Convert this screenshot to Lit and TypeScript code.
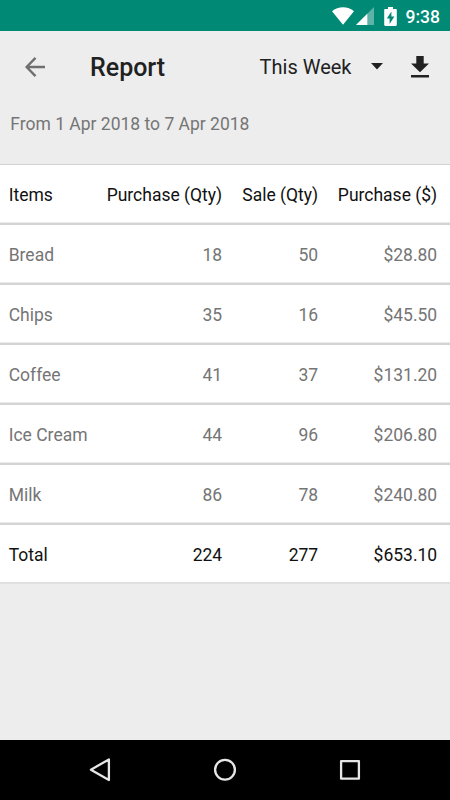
import { LitElement, html, css } from "lit";
import { customElement, property } from "lit/decorators.js";

interface Row {
  cells: string[];
  strong?: boolean;
}

const ROWS: Row[] = [
  { cells: ["Items", "Purchase (Qty)", "Sale (Qty)", "Purchase ($)"], strong: true },
  { cells: ["Bread", "18", "50", "$28.80"] },
  { cells: ["Chips", "35", "16", "$45.50"] },
  { cells: ["Coffee", "41", "37", "$131.20"] },
  { cells: ["Ice Cream", "44", "96", "$206.80"] },
  { cells: ["Milk", "86", "78", "$240.80"] },
  { cells: ["Total", "224", "277", "$653.10"], strong: true },
];

@customElement("status-bar")
class StatusBar extends LitElement {
  static styles = css`
    :host {
      display: flex;
      align-items: center;
      box-sizing: border-box;
      height: 31px;
      background: #008975;
      color: #fff;
      padding: 1px 10px 0 332px;
    }
    svg {
      display: block;
      flex: none;
    }
    .signal {
      margin-left: 2px;
    }
    .battery {
      margin-left: 10px;
    }
    .clock {
      margin-left: auto;
      font-size: 17.5px;
      line-height: 30px;
      font-weight: 500;
      padding-top: 1px;
      white-space: nowrap;
    }
  `;
  render() {
    return html`
      <svg width="22" height="18" viewBox="0 0 22 18" fill="#fff">
        <path d="M0 4.2C3 1.7 7 .3 11 .3s8 1.4 11 3.9L11 17.8z" />
      </svg>
      <svg class="signal" width="18" height="18" viewBox="0 0 18 18" fill="#fff">
        <path d="M18 0v18H0z" opacity=".36" />
        <path d="M11.3 6.7V18H0z" />
      </svg>
      <svg class="battery" width="13" height="19" viewBox="0 0 13 19">
        <path
          fill="#fff"
          fill-rule="evenodd"
          d="M4 0h5v2h2.6c.8 0 1.2.5 1.2 1.2v14.6c0 .7-.4 1.2-1.2 1.2H1.4C.6 19 .2 18.5.2 17.8V3.2C.2 2.5.6 2 1.4 2H4zM7.4 4.6L2.8 11.6h2.8V16.9L10.4 9.6H7.4z"
        />
      </svg>
      <span class="clock">9:38</span>
    `;
  }
}

@customElement("report-header")
class ReportHeader extends LitElement {
  static styles = css`
    :host {
      display: block;
      height: 133px;
    }
    .bar {
      display: flex;
      align-items: center;
      box-sizing: border-box;
      height: 72px;
      padding: 0 21px 1px 25px;
      color: #212121;
    }
    svg {
      display: block;
      flex: none;
    }
    .title {
      margin: 0 0 0 45px;
      padding-top: 2px;
      font-size: 25px;
      line-height: 30px;
      font-weight: 500;
    }
    .period {
      display: flex;
      align-items: center;
      gap: 19.5px;
      margin-left: auto;
      font-size: 20px;
      line-height: 30px;
    }
    .period span {
      padding-top: 1px;
    }
    .download {
      margin-left: 28px;
    }
    .range {
      margin: 9px 0 0 10.3px;
      font-size: 17.5px;
      line-height: 24px;
      color: #757575;
    }
  `;
  render() {
    return html`
      <div class="bar">
        <svg width="20" height="20" viewBox="0 0 20 20" fill="none" stroke="#6f6f6f" stroke-width="2.4">
          <path d="M20 10H2M10.5 .9L1.6 10l8.9 9.1" />
        </svg>
        <h1 class="title">Report</h1>
        <div class="period">
          <span>This Week</span>
          <svg width="12" height="7" viewBox="0 0 12 7" fill="#212121"><path d="M0 0h12L6 6.5z" /></svg>
        </div>
        <svg class="download" width="18" height="22" viewBox="0 0 18 22" fill="#212121">
          <path d="M5.3 0h7.4v7.5H18L9 16.2 0 7.5h5.3zM0 19h18v2.4H0z" />
        </svg>
      </div>
      <p class="range">From 1 Apr 2018 to 7 Apr 2018</p>
    `;
  }
}

@customElement("report-table")
class ReportTable extends LitElement {
  @property({ attribute: false }) rows: Row[] = [];
  static styles = css`
    :host {
      display: block;
      border-top: 1px solid #d2d2d2;
    }
    .row {
      display: grid;
      grid-template-columns: 90px 123.5px 96px 119px;
      box-sizing: border-box;
      height: 60px;
      padding-left: 8.7px;
      line-height: 60px;
      font-size: 17.5px;
      white-space: nowrap;
      background: #fff;
      color: #757575;
      border-bottom: 2px solid #d4d4d4;
      box-shadow: inset 0 -1px #ebebeb;
    }
    .row:last-child {
      height: 59px;
      border-bottom-color: #e0e0e0;
      box-shadow: none;
    }
    .strong {
      color: #111;
    }
    .num {
      text-align: right;
    }
  `;
  render() {
    return this.rows.map(
      (r) => html`<div class="row ${r.strong ? "strong" : ""}">
        ${r.cells.map((c, i) => html`<span class=${i ? "num" : "name"}>${c}</span>`)}
      </div>`
    );
  }
}

@customElement("nav-bar")
class NavBar extends LitElement {
  static styles = css`
    :host {
      display: flex;
      align-items: center;
      justify-content: space-between;
      box-sizing: border-box;
      height: 60px;
      padding: 0 88px;
      background: #000;
    }
    svg {
      display: block;
      fill: none;
      stroke: #e6e6e6;
      stroke-width: 2.3;
      stroke-linejoin: round;
    }
  `;
  render() {
    return html`
      <svg width="24" height="24" viewBox="0 0 24 24"><path d="M20.9 1.4v20.6L2.9 11.7z" /></svg>
      <svg width="24" height="24" viewBox="0 0 24 24"><circle cx="12" cy="11.8" r="9.9" /></svg>
      <svg width="24" height="24" viewBox="0 0 24 24"><rect x="3.1" y="3.1" width="17.8" height="17.6" /></svg>
    `;
  }
}

@customElement("app-root")
class AppRoot extends LitElement {
  static styles = css`
    :host {
      display: flex;
      flex-direction: column;
      width: 450px;
      height: 800px;
      overflow: hidden;
      background: #ededed;
      font-family: Roboto, sans-serif;
    }
    nav-bar {
      margin-top: auto;
    }
  `;
  render() {
    return html`
      <status-bar></status-bar>
      <report-header></report-header>
      <report-table .rows=${ROWS}></report-table>
      <nav-bar></nav-bar>
    `;
  }
}
